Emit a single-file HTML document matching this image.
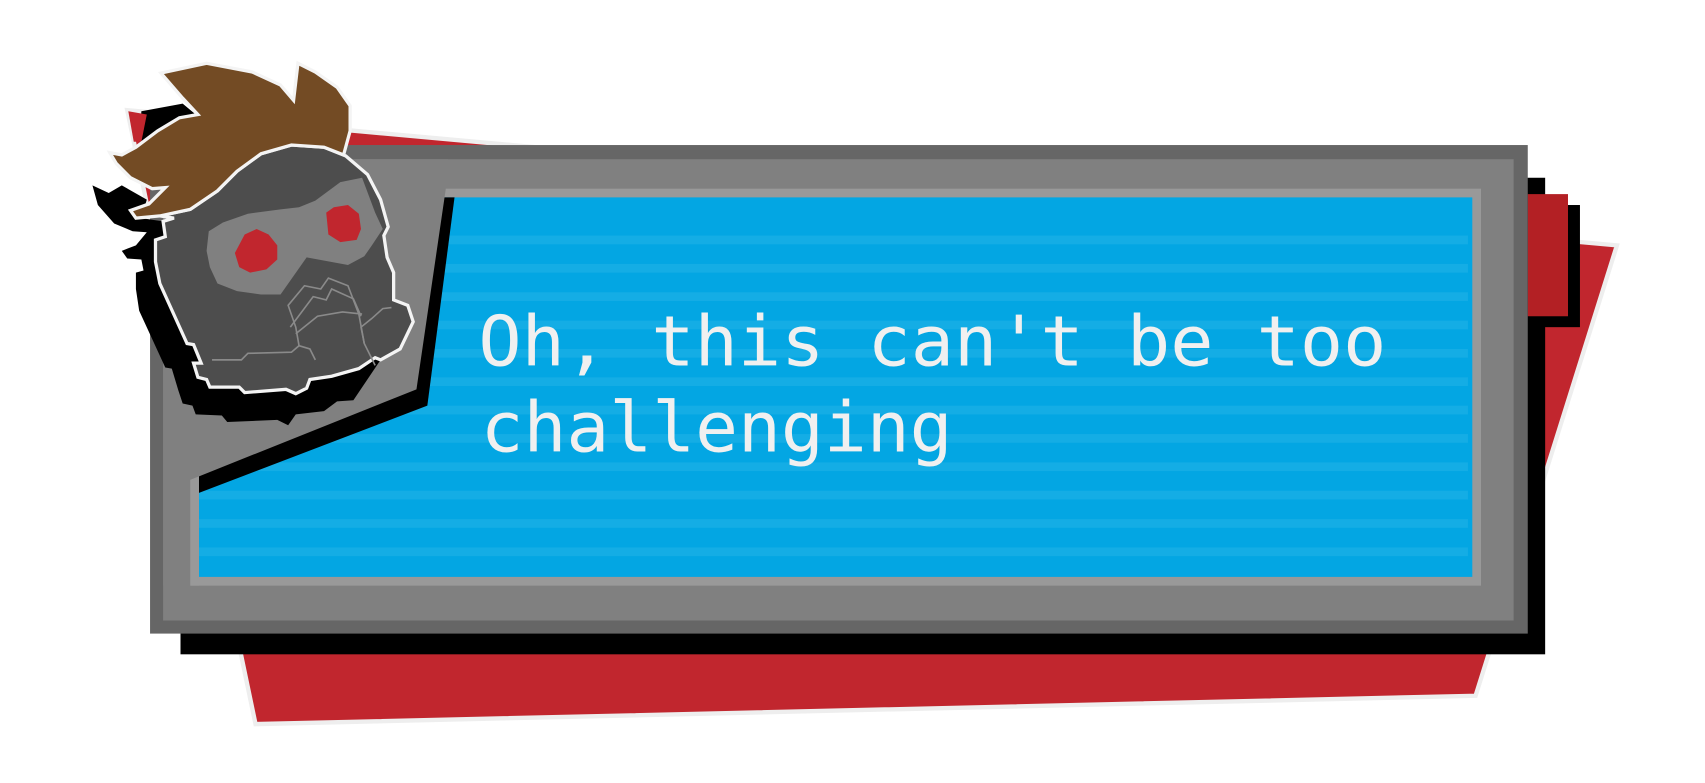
<!DOCTYPE html>
<html><head><meta charset="utf-8"><style>
html,body{margin:0;padding:0;background:#fff;width:1705px;height:783px;overflow:hidden}
svg{display:block}
</style></head><body>
<svg width="1705" height="783" viewBox="0 0 1568 718" preserveAspectRatio="none" xmlns="http://www.w3.org/2000/svg">
<!-- back red parallelogram -->
<polygon points="117,101 1487,225 1357,638 235,664" fill="#c1262e" stroke="#eeeeee" stroke-width="4"/>
<!-- black shadow -->
<rect x="166" y="163" width="1255" height="437" fill="#000"/>
<rect x="1405" y="188" width="48" height="112" fill="#000"/>
<rect x="1405" y="178" width="37" height="112" fill="#b32024"/>
<!-- gray frame -->
<rect x="138" y="133" width="1267" height="448" fill="#666"/>
<rect x="150" y="146" width="1242" height="423" fill="#808080"/>
<rect x="175" y="173" width="1187" height="364" fill="#999"/>
<rect x="183" y="181" width="1171" height="348" fill="#03a6e3"/>
<g fill="#14ade5">
<rect x="183" y="216" width="1167" height="8"/>
<rect x="183" y="242" width="1167" height="8"/>
<rect x="183" y="268" width="1167" height="8"/>
<rect x="183" y="294" width="1167" height="8"/>
<rect x="183" y="320" width="1167" height="8"/>
<rect x="183" y="346" width="1167" height="8"/>
<rect x="183" y="372" width="1167" height="8"/>
<rect x="183" y="398" width="1167" height="8"/>
<rect x="183" y="424" width="1167" height="8"/>
<rect x="183" y="450" width="1167" height="8"/>
<rect x="183" y="476" width="1167" height="8"/>
<rect x="183" y="502" width="1167" height="8"/>
</g>
<!-- cut corner -->
<polygon points="183,181 418,181 393,372 183,452" fill="#000"/>
<polygon points="150,146 412,146 410,173 383,357 175,440 175,537 150,537" fill="#808080"/>
<polygon points="175,440 183,437 183,537 175,537" fill="#999"/>
<!-- text -->
<g font-family="'DejaVu Sans Mono','Liberation Mono',monospace" font-size="64" fill="#f0f0f0">
<text x="440" y="335" textLength="835" lengthAdjust="spacingAndGlyphs">Oh, this can't be too</text>
<text x="442" y="414" textLength="434" lengthAdjust="spacingAndGlyphs">challenging</text>
</g>
<!-- head shadow -->
<polygon points="130,102 168,95 180,105 150,125 128,140" fill="#000"/>
<polygon points="85,170 100,177 112,170 135,183 130,200 150,203 152,217 143,220 143,240 147,260 172,315 178,316 185,333 178,333 182,346 190,348 193,355 220,355 225,360 263,357 272,361 282,356 285,348 305,345 330,338 345,328 350,330 325,367 310,368 298,377 272,380 265,390 255,385 209,387 204,381 180,380 177,372 168,370 164,358 158,338 152,337 128,285 125,265 125,250 132,248 130,238 117,237 112,230 125,225 135,213 122,212 105,205 90,188" fill="#000"/>
<!-- red ear -->
<polygon points="118,102 135,105 130,130 123,130" fill="#c1262e"/>
<!-- helmet -->
<polygon points="240,141 268,133 298,135 318,143 338,160 350,183 357,208 353,216 356,236 362,250 362,275 375,280 380,295 368,320 350,330 345,328 330,338 305,345 285,348 282,356 272,361 263,357 225,360 220,355 193,355 190,348 182,346 178,333 185,333 178,316 172,315 147,260 143,240 143,220 152,217 150,203 160,200 147,198 175,192 200,175 218,157" fill="#4d4d4d" stroke="#f4f4f4" stroke-width="3" stroke-linejoin="miter"/>
<polygon points="192,212 205,204 228,196 258,192 275,190 290,184 313,167 333,163 345,195 352,210 342,225 335,235 320,243 282,236 258,270 240,270 218,267 200,260 193,245 190,230" fill="#808080"/>
<polygon points="216,232 225,215 236,210 247,215 255,225 255,238 245,247 230,250 220,245" fill="#c1262e"/>
<polygon points="300,195 307,190 320,188 330,196 332,210 328,220 313,222 302,215" fill="#c1262e"/>
<g fill="none" stroke="#8a8a8a" stroke-width="1.5">
<polyline points="290,330 285,320 275,317 268,323 228,324 222,330 195,330"/>
<polyline points="275,317 272,300 265,280 280,262 295,265 302,255 320,262 330,288 335,315 345,335"/>
<polyline points="267,300 288,272 300,275 305,265 325,274 332,290"/>
<polyline points="272,306 292,290 315,286 333,288"/>
<polyline points="335,315 332,300 342,292 352,283 360,282"/>
</g>
<!-- hair -->
<polygon points="148,67 190,58 232,66 258,78 270,92 274,58 290,66 310,80 322,97 322,120 316,142 298,135 268,133 240,141 218,157 200,175 175,192 147,198 125,200 120,193 137,187 152,172 140,173 120,163 107,150 101,140 112,142 125,135 145,120 165,108 182,105 168,90" fill="#734b24" stroke="#f4f4f4" stroke-width="3"/>
</svg>
</body></html>
